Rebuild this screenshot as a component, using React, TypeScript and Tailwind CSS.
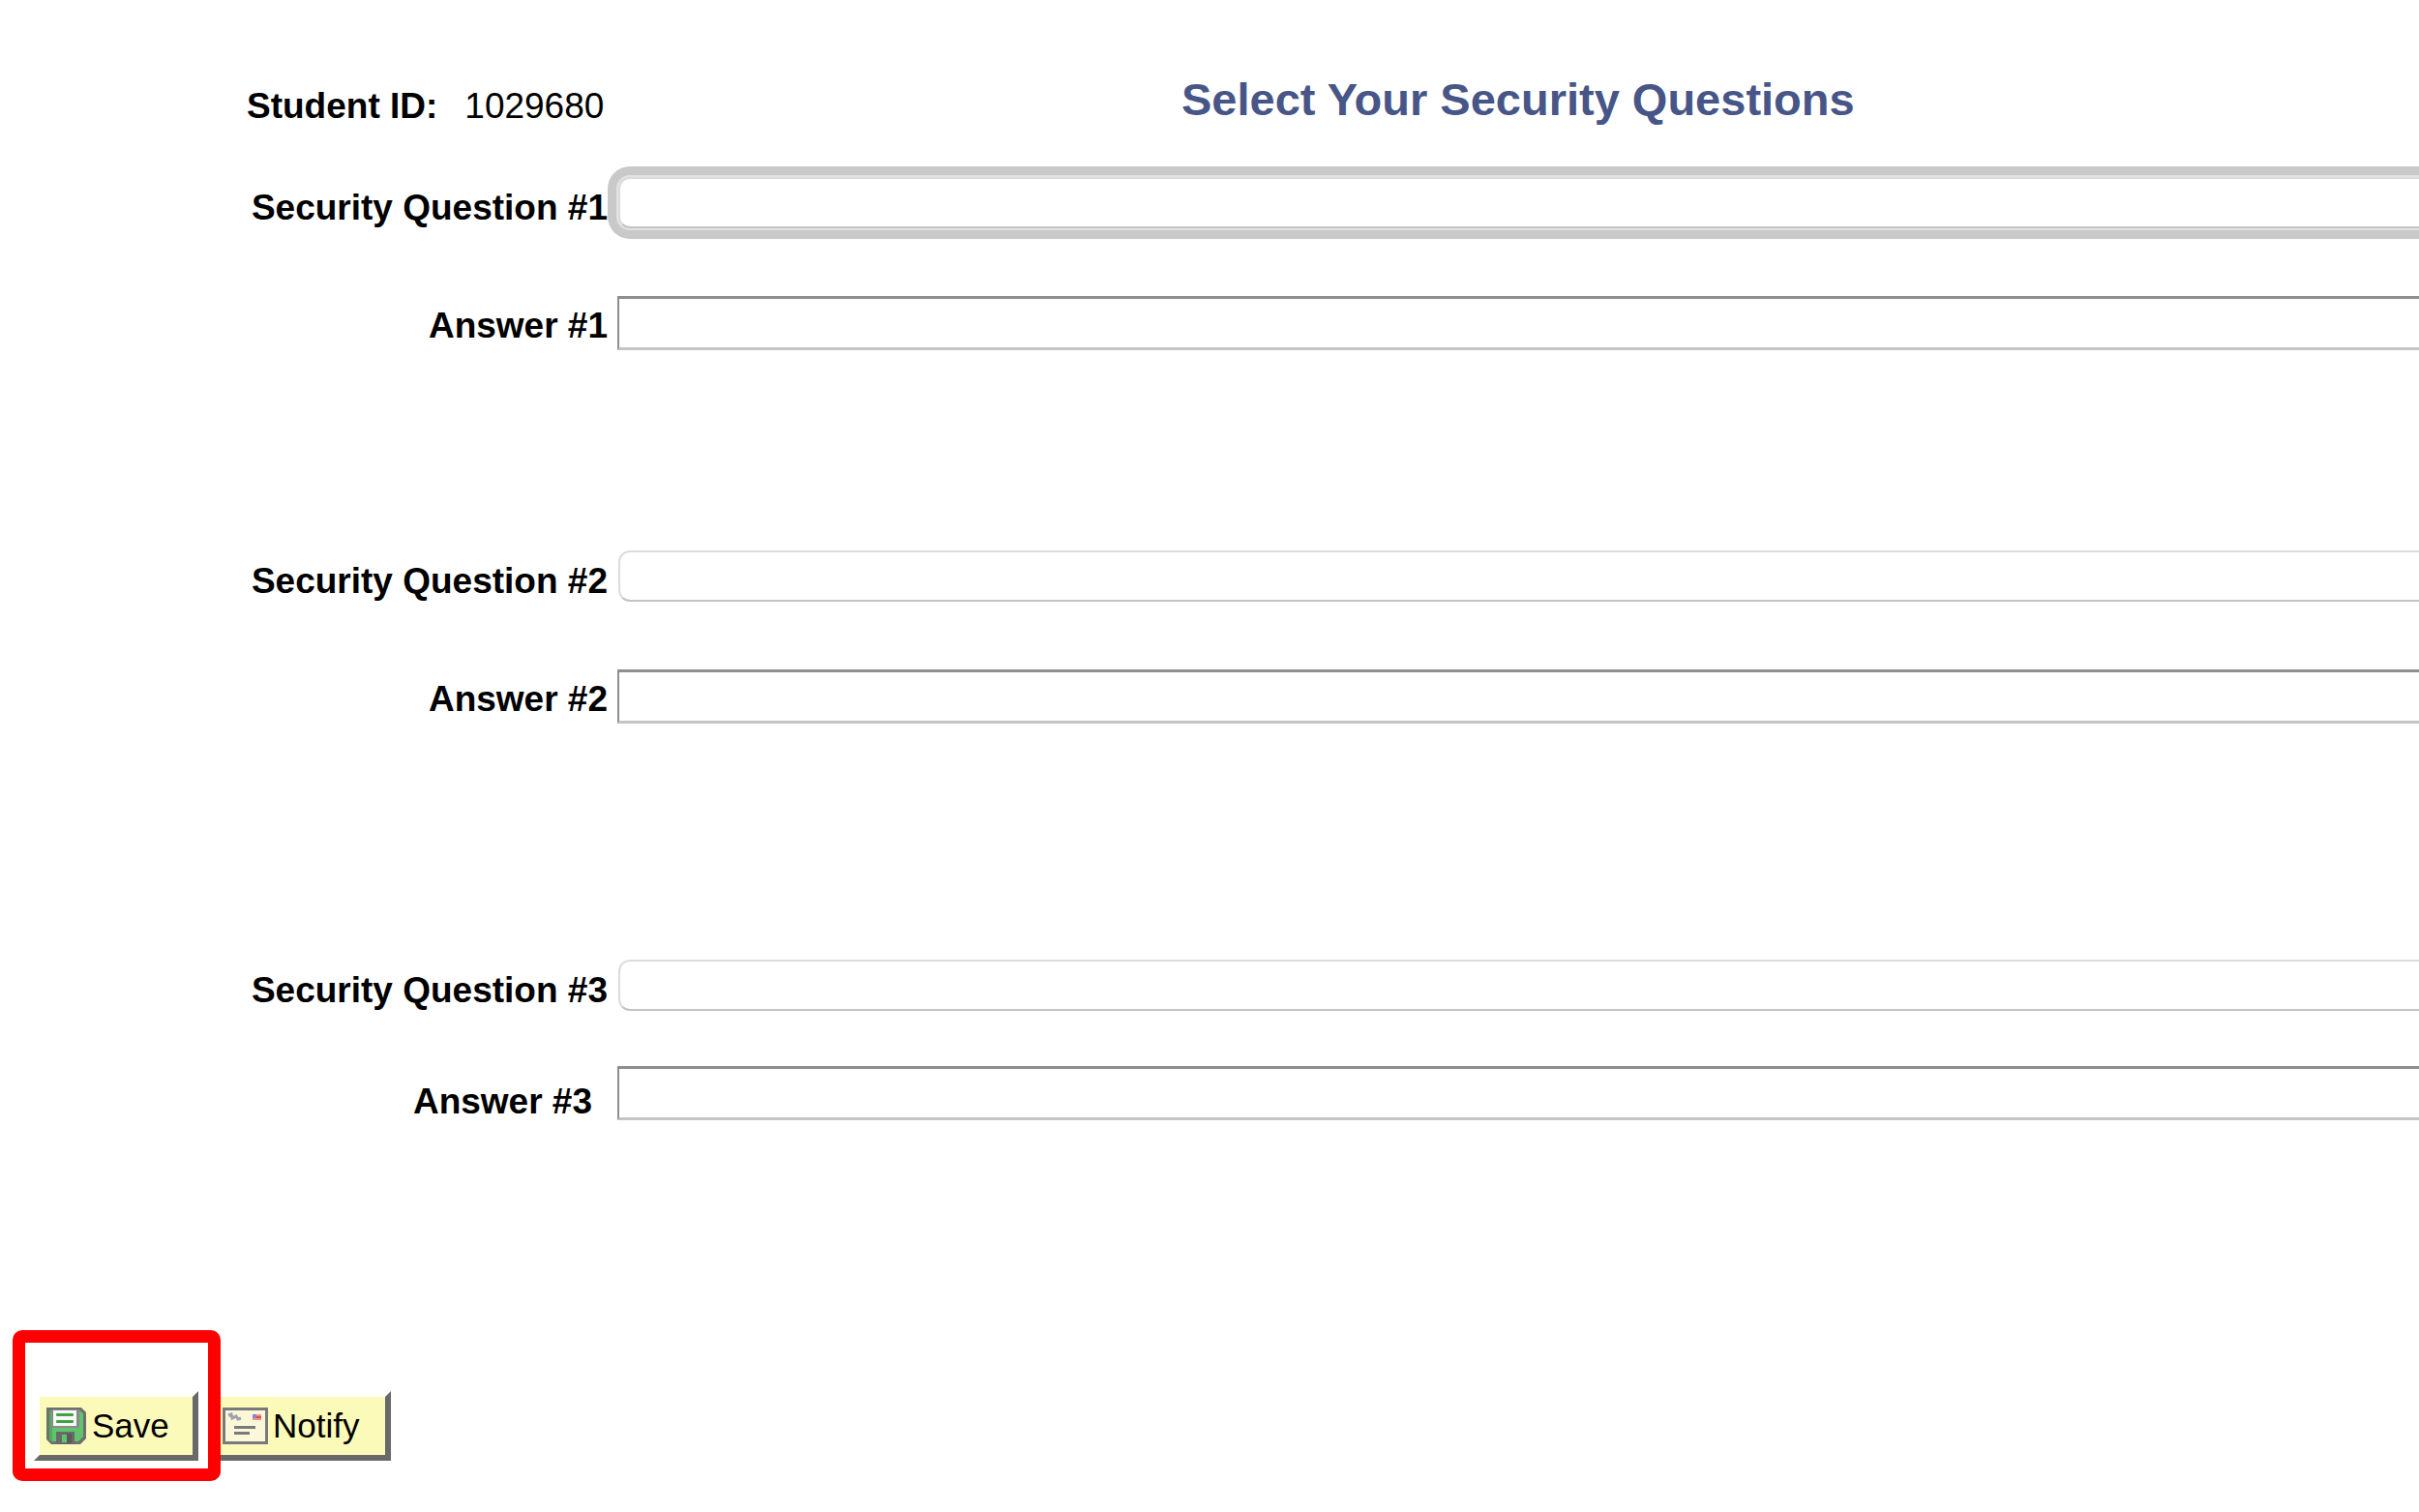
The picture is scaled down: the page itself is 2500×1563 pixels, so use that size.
import type { ReactNode } from "react";

type Entry = {
  id: number;
  groupClass: string;
  answerRowClass: string;
  answerLabelClass: string;
  selectClass: string;
};

const entries: Entry[] = [
  {
    id: 1,
    groupClass: "mt-12",
    answerRowClass: "mt-[70px]",
    answerLabelClass: "pt-[9px] pr-[10px]",
    selectClass: "shadow-[0_0_0_2px_#e2e2e2,0_0_0_11px_#c9c9ca]",
  },
  {
    id: 2,
    groupClass: "mt-[207px]",
    answerRowClass: "mt-[70px]",
    answerLabelClass: "pt-[9px] pr-[10px]",
    selectClass: "",
  },
  {
    id: 3,
    groupClass: "mt-[244px]",
    answerRowClass: "mt-[57px]",
    answerLabelClass: "pt-[15px] pr-[26px]",
    selectClass: "",
  },
];

const labelBase = "w-[638px] shrink-0 text-right font-bold whitespace-nowrap";

function SecurityEntry({ entry }: { entry: Entry }) {
  const questionId = `question-${entry.id}`;
  const answerId = `answer-${entry.id}`;
  return (
    <div className={entry.groupClass}>
      <div className="flex h-[53px] items-start">
        <label htmlFor={questionId} className={`${labelBase} pt-[10px] pr-[10px]`}>
          Security Question #{entry.id}
        </label>
        <select
          id={questionId}
          className={`-mr-8 ml-px h-[53px] min-w-0 flex-1 appearance-none rounded-xl border-2 border-[#dcdcdc] border-b-[#c4c4c4] bg-white px-4 outline-none ${entry.selectClass}`}
        >
          <option value=""></option>
        </select>
      </div>
      <div className={`flex h-14 items-start ${entry.answerRowClass}`}>
        <label htmlFor={answerId} className={`${labelBase} ${entry.answerLabelClass}`}>
          Answer #{entry.id}
        </label>
        <input
          id={answerId}
          type="text"
          className="-mr-8 h-14 min-w-0 flex-1 border-t-[3px] border-r-2 border-b-[3px] border-l-2 border-t-[#8e8e8e] border-r-[#c4c4c4] border-b-[#c4c4c4] border-l-[#8e8e8e] bg-white px-2 outline-none"
        />
      </div>
    </div>
  );
}

function DiskIcon() {
  return (
    <svg width="41" height="38" viewBox="0 0 41 38" aria-hidden="true">
      <path d="M0 0H36L41 5V32L35 38H5L0 33Z" fill="#6f6f6f" />
      <path d="M3 3H34L38 6V30L33 35H6L3 32Z" fill="#5fc46b" />
      <path d="M3 3H6V35H5L3 32Z" fill="#4fae5c" />
      <rect x="5" y="2" width="29" height="19" fill="#8a8a8a" />
      <rect x="7" y="3" width="24" height="16" fill="#f7fbf7" />
      <rect x="10" y="6" width="18" height="3" rx="1" fill="#43a047" />
      <rect x="10" y="13" width="18" height="3" rx="1" fill="#43a047" />
      <rect x="10" y="25" width="19" height="13" fill="#6a6a6a" />
      <rect x="16" y="28" width="5" height="8" fill="#5fc46b" />
      <rect x="21" y="27" width="5" height="10" fill="#5a5a5a" />
    </svg>
  );
}

function EnvelopeIcon() {
  return (
    <svg width="47" height="38" viewBox="0 0 47 38" aria-hidden="true">
      <rect x="1.5" y="1.5" width="44" height="35" fill="#fbf8da" stroke="#7a7a7a" strokeWidth="3" />
      <path d="M6 8L9 7L10 11L14 9L16 12L19 11" fill="none" stroke="#a19fa8" strokeWidth="3" />
      <rect x="31" y="7" width="9" height="6" fill="#f0938c" />
      <rect x="31" y="7" width="4" height="4" fill="#8d84cf" />
      <rect x="35" y="9" width="5" height="2" fill="#e04c4c" />
      <rect x="12" y="19" width="22" height="3" fill="#7a7a7a" />
      <rect x="12" y="25" width="16" height="3" fill="#7a7a7a" />
    </svg>
  );
}

function ActionButton({ children, className }: { children: ReactNode; className: string }) {
  return (
    <button
      type="button"
      className={`flex h-[72px] items-center border-6 border-t-transparent border-r-[#696969] border-b-[#696969] border-l-transparent bg-[#fcfab9] bg-clip-padding pl-[7px] text-[35px] leading-10 ${className}`}
    >
      {children}
    </button>
  );
}

export default function App() {
  return (
    <main
      className="min-h-screen overflow-hidden bg-white pt-20 text-[37px] leading-[44px] text-black"
      style={{ fontFamily: '"Liberation Sans", Arial, sans-serif' }}
    >
      <form>
        <header className="flex items-start">
          <p className="ml-[255px] flex w-[966px] shrink-0 gap-7 pt-2">
            <span className="font-bold">Student ID:</span>
            <span>1029680</span>
          </p>
          <h1 className="pb-[9px] text-[47px] leading-[46px] font-bold whitespace-nowrap text-[#475687]">
            Select Your Security Questions
          </h1>
        </header>

        {entries.map((entry) => (
          <SecurityEntry key={entry.id} entry={entry} />
        ))}

        <div className="relative mt-[280px] flex gap-3 pb-[53px] pl-[35px]">
          <ActionButton className="w-[170px] gap-[6px]">
            <DiskIcon />
            Save
          </ActionButton>
          <ActionButton className="w-[187px] gap-[5px]">
            <EnvelopeIcon />
            Notify
          </ActionButton>
          <div className="pointer-events-none absolute -top-[63px] left-[13px] h-[156px] w-[215px] rounded-[10px] border-[13px] border-[#fe0000]" />
        </div>
      </form>
    </main>
  );
}
